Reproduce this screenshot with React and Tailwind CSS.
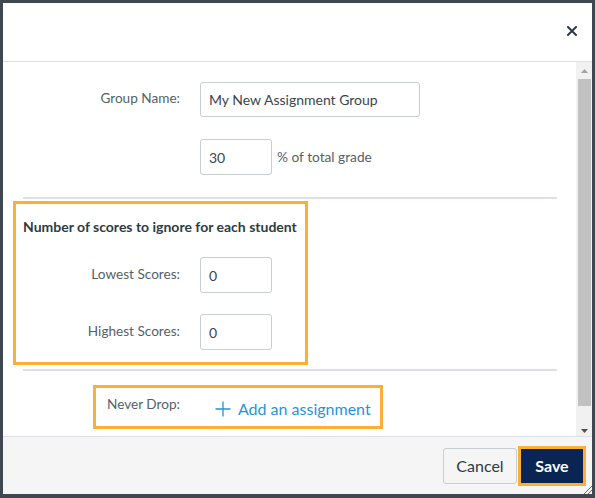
import React from 'react';

const Field = ({ label, value, width, className = '' }) => (
    <div className={`flex items-start ${className}`}>
        <label className="text-right text-[13.6px] text-[#555f69] pt-[7px] shrink-0" style={{ width }}>{label}</label>
        <input
            readOnly
            value={value}
            className="ml-[20px] h-[36px] w-[72px] rounded-[3px] border border-[#c7cdd1] bg-white px-[8px] text-[14px] text-[#3a4550] outline-none"
        />
    </div>
);

const App = () => {
    return (
        <div className="w-[595px] h-[498px] border-[3px] border-b-[4px] border-[#3f4850] bg-white flex flex-col font-['Lato','Noto_Sans',sans-serif]">
            {/* Header */}
            <div className="h-[59px] shrink-0 border-b border-[#dde1e5] flex items-center justify-end pr-[15px]">
                <svg width="10" height="10" viewBox="0 0 10 10" className="mt-[-2px]">
                    <path d="M1 1 L9 9 M9 1 L1 9" stroke="#2d3b45" strokeWidth="2" strokeLinecap="square" />
                </svg>
            </div>

            {/* Body */}
            <div className="h-[374px] shrink-0 flex">
                <div className="flex-1 flex flex-col">
                    {/* Group name */}
                    <div className="flex items-start mt-[20px]">
                        <label className="w-[177px] text-right text-[13.6px] text-[#555f69] pt-[6px]">Group Name:</label>
                        <input
                            readOnly
                            value="My New Assignment Group"
                            className="ml-[20px] h-[35px] w-[220px] rounded-[3px] border border-[#c7cdd1] bg-white px-[8px] text-[14px] text-[#3a4550] outline-none"
                        />
                    </div>
                    <div className="flex items-center mt-[22px] ml-[197px]">
                        <input
                            readOnly
                            value="30"
                            className="h-[36px] w-[72px] rounded-[3px] border border-[#c7cdd1] bg-white px-[8px] text-[14px] text-[#3a4550] outline-none"
                        />
                        <span className="ml-[5px] text-[13.7px] text-[#555f69]">% of total grade</span>
                    </div>

                    <div className="mt-[22px] ml-[20px] w-[534px] h-[2px] bg-[#dde1e5]" />

                    {/* Drop rules */}
                    <div className="mt-[2px] ml-[10px] w-[295px] h-[164px] border-[3px] border-[#fbb034] pl-[7px] pt-[14px]">
                        <p className="text-[14px] font-bold text-[#2d3b45] leading-[18px]">Number of scores to ignore for each student</p>
                        <Field label="Lowest Scores:" value="0" width={157} className="mt-[21px] -ml-[7px] pl-[7px]" />
                        <Field label="Highest Scores:" value="0" width={157} className="mt-[21px] -ml-[7px] pl-[7px]" />
                    </div>

                    <div className="mt-[4px] ml-[20px] w-[534px] h-[2px] bg-[#dde1e5]" />

                    {/* Never drop */}
                    <div className="mt-[14px] ml-[90px] w-[290px] h-[44px] border-[3px] border-[#fbb034] flex items-start pl-[11px]">
                        <span className="text-[13.6px] text-[#555f69] pt-[6px]">Never Drop:</span>
                        <span className="ml-[35px] pt-[9px] flex items-center text-[16px] text-[#1f95d8]">
                            <svg width="16" height="16" viewBox="0 0 16 16" className="mr-[7px]">
                                <path d="M8 0.5 V15.5 M0.5 8 H15.5" stroke="#1f95d8" strokeWidth="1.3" />
                            </svg>
                            Add an assignment
                        </span>
                    </div>
                </div>

                {/* Scrollbar */}
                <div className="w-[16px] shrink-0 bg-[#f1f1f1] flex flex-col items-center">
                    <div className="h-[17px] flex items-center justify-center">
                        <svg width="7" height="4" viewBox="0 0 7 4"><path d="M0 4 L3.5 0 L7 4 Z" fill="#a3a3a3" /></svg>
                    </div>
                    <div className="w-[13px] h-[327px] bg-[#c1c1c1]" />
                    <div className="flex-1 flex items-end justify-center pb-[3px]">
                        <svg width="7" height="4" viewBox="0 0 7 4"><path d="M0 0 L7 0 L3.5 4 Z" fill="#505050" /></svg>
                    </div>
                </div>
            </div>

            {/* Footer */}
            <div className="flex-1 relative bg-[#f5f5f5] border-t border-[#dde1e5] flex items-center justify-end pr-[6px] gap-[1px]">
                <button className="h-[36px] w-[74px] rounded-[3px] border border-[#c7cdd1] bg-[#f5f5f5] text-[16px] text-[#2d3b45]">Cancel</button>
                <div className="h-[40px] w-[68px] border-[3px] border-[#fbb034]">
                    <button className="h-full w-full bg-[#0b2552] text-[16px] font-bold text-white">Save</button>
                </div>
                <svg width="9" height="9" viewBox="0 0 9 9" className="absolute right-0 bottom-0">
                    <path d="M9 1 L1 9 M9 5 L5 9" stroke="#6b6b6b" strokeWidth="1" />
                </svg>
            </div>
        </div>
    );
};

export default App;
